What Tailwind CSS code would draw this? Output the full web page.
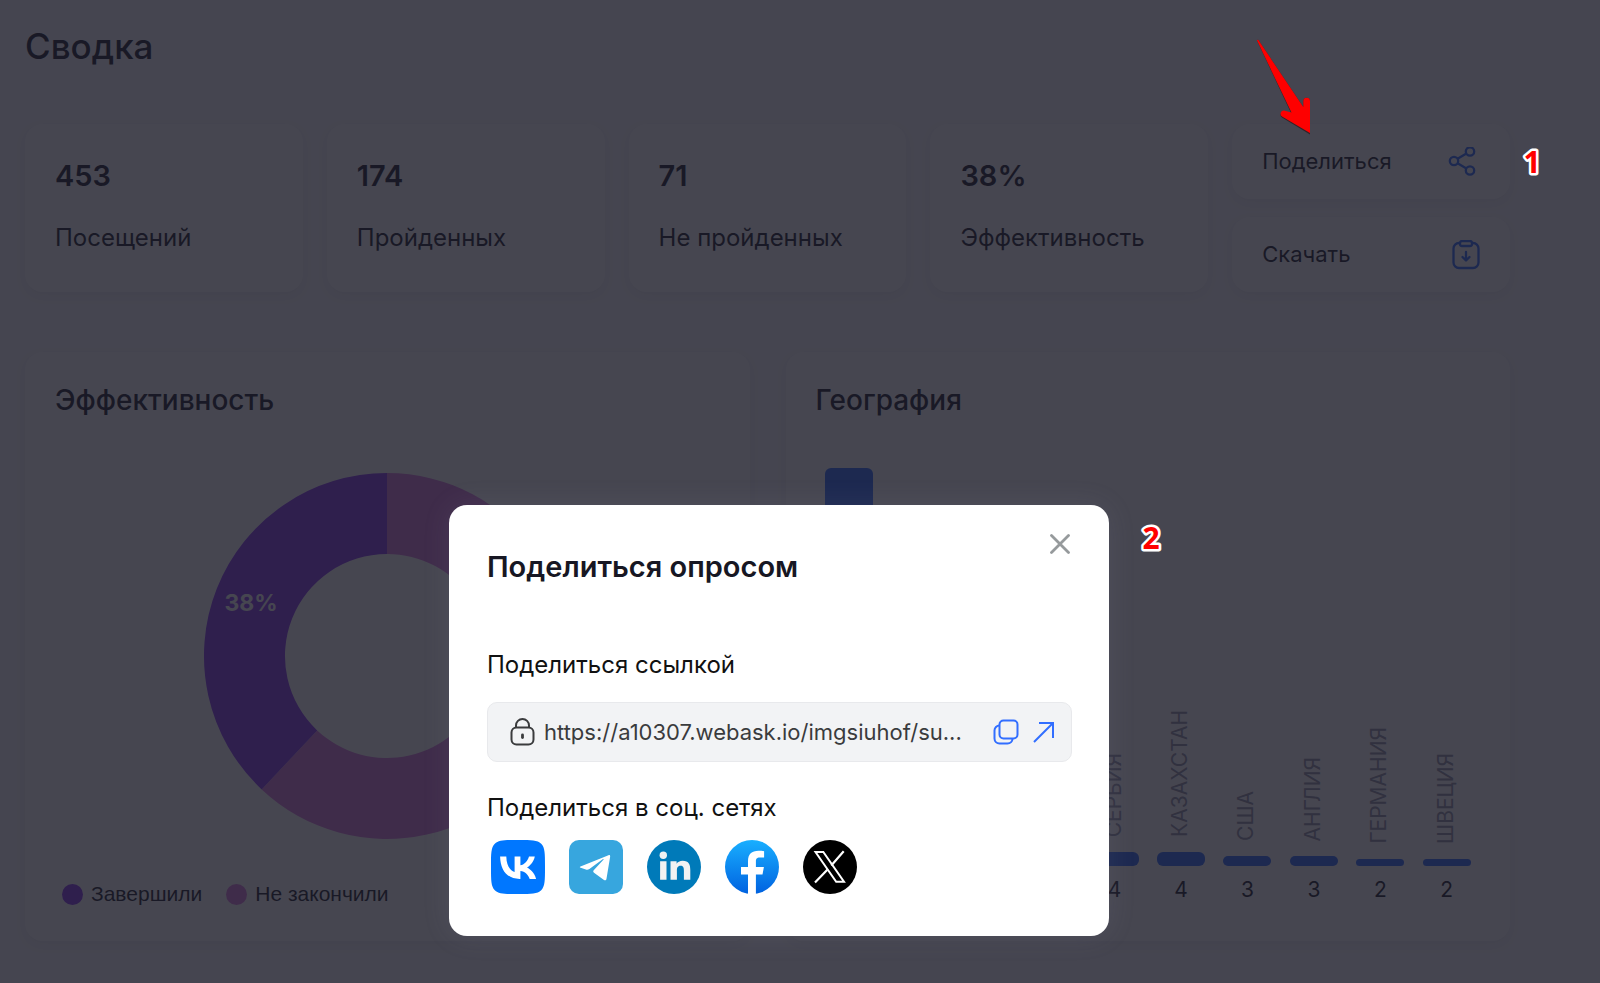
<!DOCTYPE html>
<html lang="ru">
  <head>
    <meta charset="UTF-8" />
    <meta name="viewport" content="width=device-width, initial-scale=1.0" />
    <title>Сводка</title>
    <script src="https://cdn.jsdelivr.net/npm/@tailwindcss/browser@4"></script>
  </head>
  <body
    class="relative min-h-screen overflow-x-hidden bg-[#f9f9fc] font-['Inter','Liberation_Sans',sans-serif] text-[#1e1e2d]"
  >
    <!-- Summary page -->
    <main class="min-h-screen pt-[23px] pr-[90px] pb-10 pl-[25px]">
      <h1 class="text-[35px] leading-[46px] font-medium">Сводка</h1>

      <!-- Stat cards -->
      <section class="mt-[55px] grid grid-cols-5 gap-6">
        <div class="rounded-[18px] bg-white px-[30px] pt-8 pb-[34px] shadow-[0_4px_12px_rgba(30,30,60,0.06)]">
          <p class="text-[29px] leading-10 font-semibold">453</p>
          <p class="mt-[22px] text-[24px] leading-10">Посещений</p>
        </div>
        <div class="rounded-[18px] bg-white px-[30px] pt-8 pb-[34px] shadow-[0_4px_12px_rgba(30,30,60,0.06)]">
          <p class="text-[29px] leading-10 font-semibold">174</p>
          <p class="mt-[22px] text-[24px] leading-10">Пройденных</p>
        </div>
        <div class="rounded-[18px] bg-white px-[30px] pt-8 pb-[34px] shadow-[0_4px_12px_rgba(30,30,60,0.06)]">
          <p class="text-[29px] leading-10 font-semibold">71</p>
          <p class="mt-[22px] text-[24px] leading-10">Не пройденных</p>
        </div>
        <div class="rounded-[18px] bg-white px-[30px] pt-8 pb-[34px] shadow-[0_4px_12px_rgba(30,30,60,0.06)]">
          <p class="text-[29px] leading-10 font-semibold">38%</p>
          <p class="mt-[22px] text-[24px] leading-10">Эффективность</p>
        </div>
        <div class="flex flex-col gap-[18px]">
          <button
            class="flex flex-1 items-center justify-between rounded-[18px] bg-white pr-[33px] pl-[30px] text-[22px] shadow-[0_4px_12px_rgba(30,30,60,0.06)]"
          >
            Поделиться
            <svg class="size-[30px]" viewBox="0 0 30 30" fill="none" stroke="#326eff" stroke-width="2.300">
              <circle cx="7" cy="14" r="4.200" />
              <circle cx="23" cy="4.500" r="4.200" />
              <circle cx="23" cy="23.500" r="4.200" />
              <path d="M10.600 11.800 19.400 6.600M10.600 16.200l8.800 5.200" />
            </svg>
          </button>
          <button
            class="flex flex-1 items-center justify-between rounded-[18px] bg-white pr-[29px] pl-[30px] text-[22px] shadow-[0_4px_12px_rgba(30,30,60,0.06)]"
          >
            Скачать
            <svg class="size-[30px]" viewBox="0 0 30 30" fill="none" stroke="#326eff" stroke-width="2.300" stroke-linecap="round" stroke-linejoin="round">
              <path d="M9 3H8a5.500 5.500 0 0 0-5.500 5.500V22.500A5.500 5.500 0 0 0 8 28h14a5.500 5.500 0 0 0 5.500-5.500V8.500A5.500 5.500 0 0 0 22 3h-1" />
              <rect x="9" y="1" width="12" height="5" rx="2" />
              <path d="M15 12v8M11.500 17l3.500 3.500 3.500-3.500" />
            </svg>
          </button>
        </div>
      </section>

      <!-- Charts -->
      <section class="mt-[60px] grid grid-cols-2 gap-9">
        <div class="flex h-[589px] flex-col rounded-[18px] bg-white px-[30px] pt-7 shadow-[0_4px_12px_rgba(30,30,60,0.06)]">
          <h2 class="text-[28px] leading-10 font-medium">Эффективность</h2>
          <svg class="mx-auto mt-[52px] size-[368px]" viewBox="0 0 368 368">
            <path d="M184 1A183 183 0 1 1 58.700 317.400L114.200 258.400A102 102 0 1 0 184 82Z" fill="#dc7de1" />
            <path d="M184 1A183 183 0 0 0 58.700 317.400L114.200 258.400A102 102 0 0 1 184 82Z" fill="#8c3cf0" />
            <text x="48" y="139" text-anchor="middle" font-size="23" font-weight="700" fill="#fff">38%</text>
          </svg>
          <div class="mt-[38px] flex gap-6 pl-[7px] font-['Liberation_Sans',sans-serif] text-[21px] leading-8">
            <div class="flex items-center gap-2">
              <span class="size-[21px] rounded-full bg-[#8c3cf0]"></span>Завершили
            </div>
            <div class="flex items-center gap-2">
              <span class="size-[21px] rounded-full bg-[#dc7de1]"></span>Не закончили
            </div>
          </div>
        </div>

        <div class="flex h-[589px] flex-col rounded-[18px] bg-white px-[30px] pt-7 pb-[33px] shadow-[0_4px_12px_rgba(30,30,60,0.06)]">
          <h2 class="text-[28px] leading-10 font-medium">География</h2>
          <div id="geo" class="grid flex-1 grid-cols-10"></div>
        </div>
      </section>
    </main>

    <!-- Overlay -->
    <div class="absolute inset-0 flex items-end justify-center bg-[#181824]/80 pr-[42px] pb-[47px]">
      <!-- Share dialog -->
      <div
        role="dialog"
        aria-labelledby="share-title"
        class="relative w-[660px] rounded-[18px] bg-white pt-[42px] pr-[37px] pb-[42px] pl-[38px] shadow-[0_0_28px_rgba(160,160,190,0.12)]"
      >
        <button aria-label="Закрыть" class="absolute top-6 right-[34px] p-[5px]">
          <svg class="size-5" viewBox="0 0 20 20" fill="none" stroke="#969a9c" stroke-width="2.800" stroke-linecap="round">
            <path d="M1.500 1.500l17 17M18.500 1.500l-17 17" />
          </svg>
        </button>
        <h2 id="share-title" class="text-[29px] leading-10 font-semibold text-[#171723]">
          Поделиться опросом
        </h2>
        <label for="share-link" class="mt-[62px] block text-[24px] leading-8 text-[#111]">Поделиться ссылкой</label>
        <div class="mt-[21px] flex h-[60px] items-center rounded-[10px] border border-[#e8e9ec] bg-[#f2f3f5] pr-4 pl-[22px]">
          <svg class="h-7 w-[25px] shrink-0" viewBox="0 0 25 28" fill="none" stroke="#3a3b3d" stroke-width="2">
            <path d="M6 9.500V7.500a6.500 6.500 0 0 1 13 0v2" />
            <rect x="1.500" y="9.500" width="22" height="17" rx="5" />
            <path d="M12.500 17v2.500" stroke-width="2.800" stroke-linecap="round" />
          </svg>
          <input
            id="share-link"
            type="text"
            readonly
            value="https://a10307.webask.io/imgsiuhof/su..."
            class="ml-[9px] min-w-0 flex-1 bg-transparent text-[22px] text-[#3a3b3d] outline-none"
          />
          <button aria-label="Копировать" class="ml-2 shrink-0">
            <svg class="size-[26px]" viewBox="0 0 26 26" fill="none" stroke="#326eff" stroke-width="2">
              <rect x="6.500" y="1.500" width="18" height="18" rx="4" />
              <path d="M6.500 6.500a5 5 0 0 0-5 5v8a5 5 0 0 0 5 5h8a5 5 0 0 0 5-5" />
            </svg>
          </button>
          <a href="#" aria-label="Открыть" class="ml-[14px] shrink-0">
            <svg class="size-[22px]" viewBox="0 0 22 22" fill="none" stroke="#326eff" stroke-width="2">
              <path d="M6 2h14v15M20 2 1 21" />
            </svg>
          </a>
        </div>
        <h3 class="mt-[30px] text-[24px] leading-8 text-[#111]">Поделиться в соц. сетях</h3>
        <div class="mt-4 flex gap-6 pl-1">
          <a href="#" aria-label="VK">
            <svg class="size-[54px]" viewBox="0 0 54 54">
              <path d="M0 26C0 13.700 0 7.600 3.800 3.800S13.700 0 26 0h2c12.300 0 18.400 0 22.200 3.800S54 13.700 54 26v2c0 12.300 0 18.400-3.800 22.200S40.300 54 28 54h-2c-12.300 0-18.400 0-22.200-3.800S0 40.300 0 28z" fill="#07f" />
              <path d="M28.700 38.900C16.400 38.900 9.400 30.500 9.100 16.400h6.200c.2 10.300 4.700 14.700 8.300 15.600V16.400h5.800v8.900c3.600-.4 7.300-4.400 8.600-8.900h5.800c-1 5.500-5 9.500-7.900 11.200 2.900 1.300 7.500 4.900 9.200 11.300h-6.400c-1.400-4.300-4.800-7.600-9.300-8v8z" fill="#fff" />
            </svg>
          </a>
          <a href="#" aria-label="Telegram">
            <svg class="size-[54px]" viewBox="0 0 54 54">
              <rect width="54" height="54" rx="10" fill="#37a6de" />
              <path d="M11.500 26.500 39.500 15.200c1.200-.4 1.900.3 1.600 1.700l-3.600 21.900c-.3 1.500-1.300 1.900-2.500 1.200l-10-7.300c-1-.8-1-1.600-.1-2.600l9.500-10.300c.5-.6 0-.9-.7-.5L20.400 28.900c-1.200.8-2.300.9-3.600.5l-5.100-1.600c-1.100-.3-1.100-.9-.2-1.300z" fill="#fff" />
            </svg>
          </a>
          <a href="#" aria-label="LinkedIn">
            <svg class="size-[54px]" viewBox="0 0 54 54">
              <circle cx="27" cy="27" r="27" fill="#007ab9" />
              <circle cx="16.300" cy="15.200" r="3.700" fill="#f1f2f2" />
              <path d="M13.100 21.200h6.400v18.600h-6.400zM23.500 21.200h6.100v2.600c1-1.800 3.100-3.100 6.100-3.100 6.300 0 7.600 4 7.600 9.300v9.800h-6.400v-9c0-2.300-.1-5-3.300-5s-3.700 2.400-3.700 4.900v9.100h-6.400z" fill="#f1f2f2" />
            </svg>
          </a>
          <a href="#" aria-label="Facebook">
            <svg class="size-[54px]" viewBox="0 0 54 54">
              <defs>
                <linearGradient id="fb" x1="0" y1="0" x2="0" y2="1">
                  <stop offset="0" stop-color="#19afff" />
                  <stop offset="1" stop-color="#0062e0" />
                </linearGradient>
              </defs>
              <circle cx="27" cy="27" r="27" fill="url(#fb)" />
              <path d="M23 54V34.500h-7V27h7v-5.700C23 14.200 26.700 10.800 33.500 10.800c2.100 0 4.200.2 5.600.4v6.300h-4.300c-3.200 0-3.900 1.700-3.900 3.900V27h8l-1.400 7.500h-6.600V54z" fill="#fff" />
            </svg>
          </a>
          <a href="#" aria-label="X">
            <svg class="size-[54px]" viewBox="0 0 54 54">
              <circle cx="27" cy="27" r="27" fill="#000" />
              <path d="M12.500 12H20.300L41 41.800H33.200z" fill="none" stroke="#fff" stroke-width="2" />
              <path d="M40.700 11.300 28.300 25.400M24.800 29.200 12 42.500" stroke="#fff" stroke-width="2.200" />
            </svg>
          </a>
        </div>
      </div>
    </div>

    <!-- Step markers -->
    <svg class="absolute top-[36px] left-[1250px] h-[104px] w-[70px]" viewBox="0 0 70 104">
      <path d="M7 4.500Q8 3 9 5L53.300 71V65a3.300 3.300 0 0 1 6.700 0v33.500L32 81.500a3.300 3.300 0 0 1 2-6l7 1.500z" fill="#200" opacity="0.500" />
      <path d="M7 4.500Q8 3 9 5L53.300 71V65a3.300 3.300 0 0 1 6.700 0v32L32 80.500a3.300 3.300 0 0 1 2-6l7.500 2z" fill="#fe0000" />
    </svg>
    <svg class="absolute top-[134px] left-[1504px] size-14 font-['Open_Sans',sans-serif]" viewBox="0 0 56 56">
      <text x="28" y="39" text-anchor="middle" font-size="30" font-weight="700" fill="#f00" stroke="#fff" stroke-width="5" stroke-linejoin="round" paint-order="stroke">1</text>
    </svg>
    <svg class="absolute top-[510px] left-[1123px] size-14 font-['Open_Sans',sans-serif]" viewBox="0 0 56 56">
      <text x="28" y="39" text-anchor="middle" font-size="30" font-weight="700" fill="#f00" stroke="#fff" stroke-width="5" stroke-linejoin="round" paint-order="stroke">2</text>
    </svg>

    <script>
      // label, value, bar height in px
      const countries = [
        ["", "", 398],
        ["", "", 0],
        ["", "", 0],
        ["", "", 0],
        ["СЕРБИЯ", 4, 14],
        ["КАЗАХСТАН", 4, 14],
        ["США", 3, 10],
        ["АНГЛИЯ", 3, 10],
        ["ГЕРМАНИЯ", 2, 7],
        ["ШВЕЦИЯ", 2, 7],
      ];

      document.getElementById("geo").innerHTML = countries
        .map(
          ([name, value, height]) => `
            <div class="flex flex-col items-center justify-end">
              <span class="rotate-180 [writing-mode:vertical-rl] pt-[15px] pl-[2px] text-[21px] leading-8 text-[#9696ac]">${name}</span>
              <div class="w-12 shrink-0 rounded-[6px] bg-[#326eff]" style="height: ${height}px"></div>
              <span class="mt-[7px] h-[35px] text-[21px] leading-[34px]">${value}</span>
            </div>`
        )
        .join("");
    </script>
  </body>
</html>
